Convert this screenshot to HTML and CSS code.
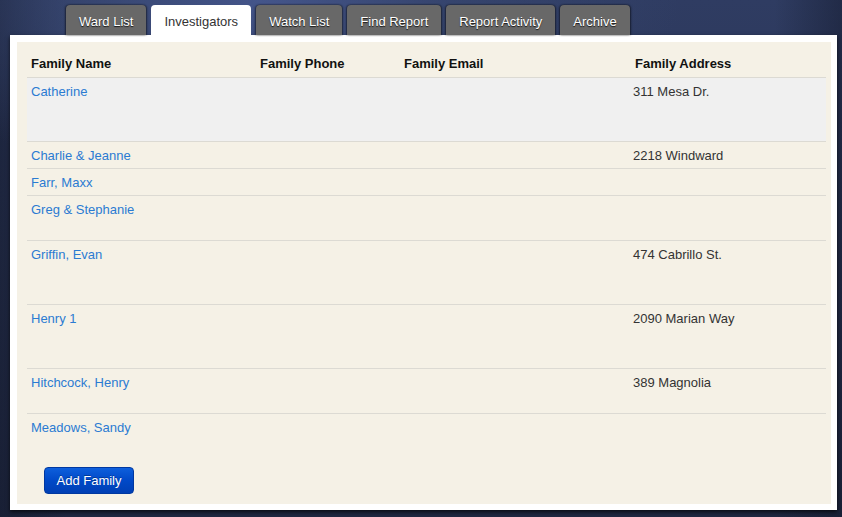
FILE: index.html
```html
<!DOCTYPE html>
<html>
<head>
<meta charset="utf-8">
<link rel="stylesheet" href="styles.css">
</head>
<body>
<div class="page">
  <nav class="tabs">
    <a class="tab">Ward List</a>
    <a class="tab active">Investigators</a>
    <a class="tab">Watch List</a>
    <a class="tab">Find Report</a>
    <a class="tab">Report Activity</a>
    <a class="tab">Archive</a>
  </nav>
  <div class="panel">
    <div class="inner">
      <table class="families">
        <colgroup>
          <col class="c-name"><col class="c-phone"><col class="c-email"><col class="c-addr">
        </colgroup>
        <thead>
          <tr><th>Family Name</th><th>Family Phone</th><th>Family Email</th><th>Family Address</th></tr>
        </thead>
        <tbody>
          <tr class="tall3 hl"><td><a>Catherine</a></td><td></td><td></td><td class="addr">311 Mesa Dr.</td></tr>
          <tr><td><a>Charlie &amp; Jeanne</a></td><td></td><td></td><td class="addr">2218 Windward</td></tr>
          <tr><td><a>Farr, Maxx</a></td><td></td><td></td><td class="addr"></td></tr>
          <tr class="tall2"><td><a>Greg &amp; Stephanie</a></td><td></td><td></td><td class="addr"></td></tr>
          <tr class="tall3"><td><a>Griffin, Evan</a></td><td></td><td></td><td class="addr">474 Cabrillo St.</td></tr>
          <tr class="tall3"><td><a>Henry 1</a></td><td></td><td></td><td class="addr">2090 Marian Way</td></tr>
          <tr class="tall2"><td><a>Hitchcock, Henry</a></td><td></td><td></td><td class="addr">389 Magnolia</td></tr>
          <tr class="last"><td><a>Meadows, Sandy</a></td><td></td><td></td><td class="addr"></td></tr>
        </tbody>
      </table>
      <button class="btn">Add Family</button>
    </div>
  </div>
</div>
</body>
</html>
```

FILE: styles.css
```css
html, body {
  margin: 0;
  height: 100%;
}
body {
  font-family: "Liberation Sans", Arial, sans-serif;
  font-size: 13px;
  background:
    radial-gradient(ellipse 420px 180px at 260px 0px, #44558a 0%, rgba(60,76,120,0.5) 45%, rgba(40,50,80,0) 100%),
    linear-gradient(90deg, rgba(20,26,45,0.6) 0%, rgba(20,26,45,0) 8%, rgba(20,26,45,0) 92%, rgba(20,26,45,0.5) 100%),
    linear-gradient(180deg, #2f3c62 0%, #27314f 60%, #1f2740 100%);
  overflow: hidden;
}
.page {
  padding-top: 5px;
}
.tabs {
  display: flex;
  gap: 5px;
  margin-left: 66px;
  height: 30px;
}
.tab {
  display: flex;
  align-items: center;
  height: 30px;
  padding: 3px 13px 0;
  box-sizing: border-box;
  background: #686868;
  color: #fff;
  text-shadow: 0 1px 1px rgba(0,0,0,0.8);
  border-radius: 4px 4px 0 0;
  box-shadow: 1px 0 2px rgba(0,0,0,0.5), -1px 0 2px rgba(0,0,0,0.5);
  white-space: nowrap;
}
.tab.active {
  background: #fff;
  color: #333;
  text-shadow: none;
  box-shadow: none;
  padding: 3px 13px 0;
}
.panel {
  margin-left: 10px;
  width: 827px;
  box-sizing: border-box;
  background: #fff;
  padding: 7px 6px 6px 7px;
  box-shadow: 0 2px 4px rgba(0,0,0,0.7);
}
.inner {
  background: #f5f1e6;
  padding: 9px 5px 10px 10px;
}
.families {
  width: 799px;
  border-collapse: collapse;
  table-layout: fixed;
}
.c-name { width: 229px; }
.c-phone { width: 144px; }
.c-email { width: 231px; }
.c-addr { width: 195px; }
.families th {
  text-align: left;
  font-weight: bold;
  color: #111;
  padding: 4px 4px;
  line-height: 18px;
  border-bottom: 1px solid #dcdad3;
}
.families td {
  vertical-align: top;
  padding: 5px 4px 3px;
  line-height: 18px;
  height: 18px;
  color: #333;
  border-bottom: 1px solid #dcdad3;
}
.families td.addr {
  padding-left: 2px;
}
.families tr.tall2 td { height: 36px; }
.families tr.tall3 td { height: 55px; }
.families tr.hl td { background: #f0f0f0; }
.families tr.last td { border-bottom: none; }
.families a {
  color: #2b7bd2;
  text-decoration: none;
}
.btn {
  display: block;
  margin: 27px 0 0 17px;
  width: 90px;
  height: 27px;
  padding: 0;
  border: 1px solid #0038a0;
  border-radius: 4px;
  background: linear-gradient(180deg, #0d5fdc 0%, #0049c8 50%, #003fb4 100%);
  color: #fff;
  font-family: "Liberation Sans", Arial, sans-serif;
  font-size: 13px;
  text-shadow: 0 -1px 0 rgba(0,0,0,0.3);
}
```
